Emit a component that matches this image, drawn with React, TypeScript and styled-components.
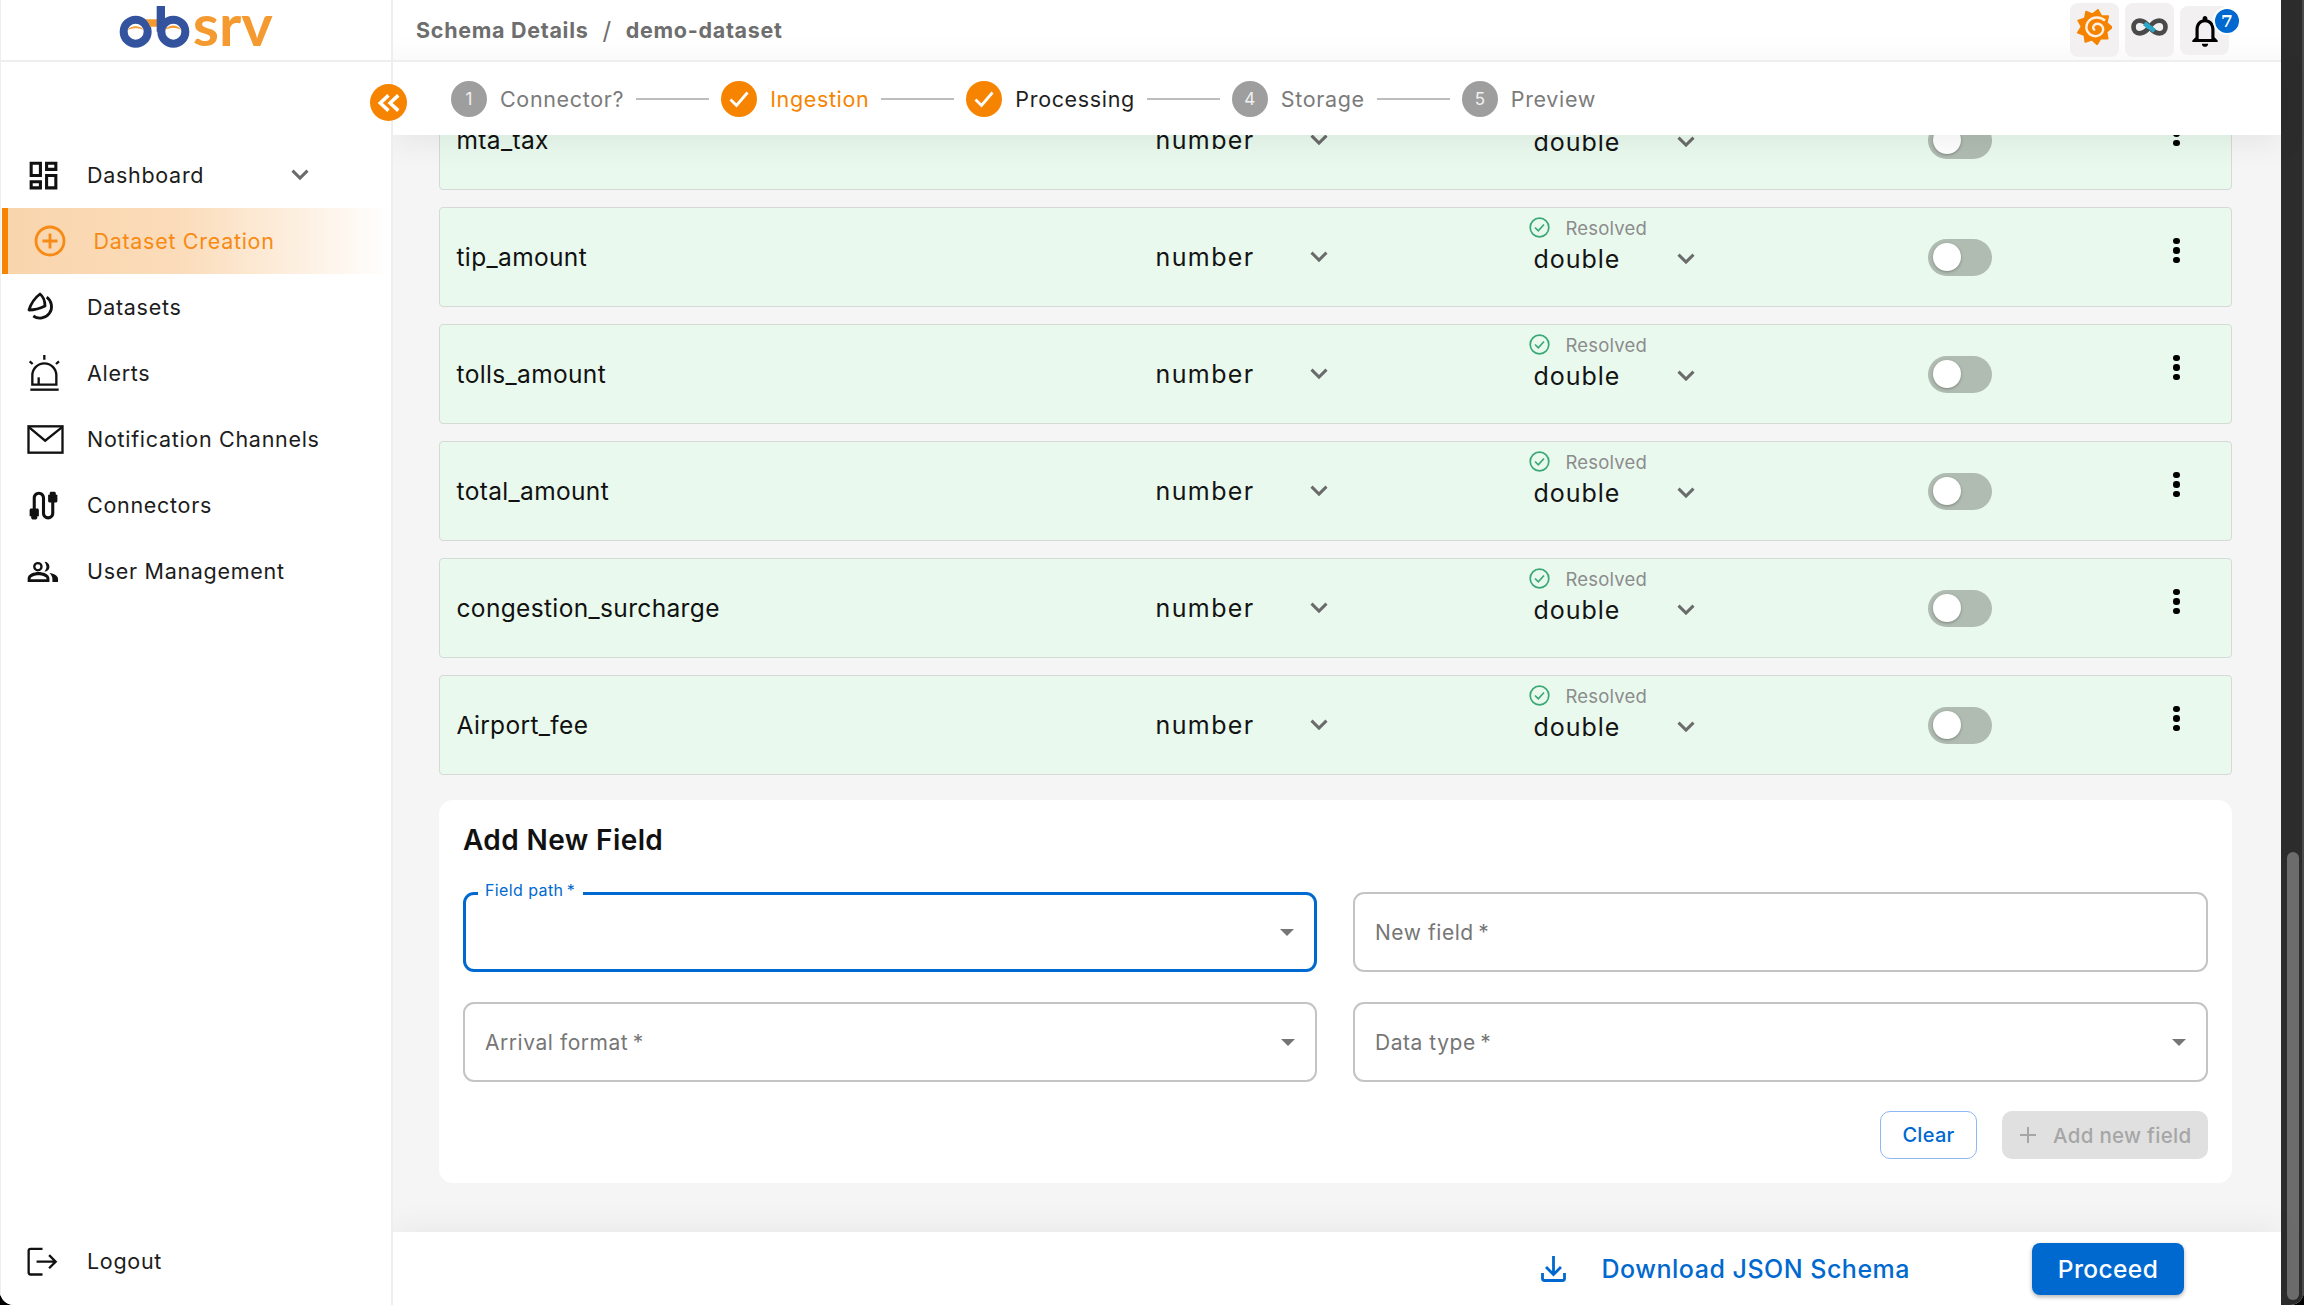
import React from "react";
import styled, { createGlobalStyle } from "styled-components";
import { MdCable, MdOutlineDashboard, MdOutlineNotifications } from "react-icons/md";

const FONT = `Inter, "Noto Sans", "Liberation Sans", sans-serif`;
const ORANGE = "#f78400";
const BLUE = "#0069d0";

const Global = createGlobalStyle`
  html, body { margin: 0; padding: 0; background: #000; overflow: hidden; }
  * { box-sizing: border-box; }
  body { font-family: ${FONT}; }
`;

const Shell = styled.div`
  width: 2304px;
  height: 1305px;
  display: flex;
  overflow: hidden;
  border-radius: 0 0 14px 14px;
  background: #fff;
`;

const Sidebar = styled.aside`
  position: relative;
  flex: 0 0 393px;
  display: flex;
  flex-direction: column;
  border-right: 2px solid #eeeeee;
  border-left: 1px solid #eeeeee;
  background: #fff;
  z-index: 4;
`;

const LogoBar = styled.div`
  height: 62px;
  flex: none;
  display: flex;
  justify-content: center;
  border-bottom: 2px solid #eeeeee;
  margin-right: -2px;
  padding-right: 5px;
`;

const CollapseButton = styled.div`
  position: absolute;
  top: 84px;
  right: -16px;
  width: 37px;
  height: 37px;
  border-radius: 50%;
  background: ${ORANGE};
  display: flex;
  align-items: center;
  justify-content: center;
`;

const Nav = styled.nav`
  flex: 1;
  display: flex;
  flex-direction: column;
  padding-top: 80px;
`;

const NavItem = styled.div<{ $active?: boolean }>`
  height: 66px;
  flex: none;
  display: flex;
  align-items: center;
  padding-left: 26px;
  font-size: 21.5px;
  letter-spacing: 0.7px;
  color: ${(p) => (p.$active ? "#f78a14" : "#1c1c1c")};
  ${(p) =>
    p.$active &&
    `border-left: 6px solid ${ORANGE};
     margin-left: 1px;
     padding-left: 25px;
     background: linear-gradient(90deg, #f9d5ad 0%, #fbdcba 45%, #ffffff 100%);`}
`;

const NavIconSlot = styled.span<{ $active?: boolean }>`
  flex: none;
  width: ${(p) => (p.$active ? "59.5px" : "60px")};
  ${(p) => p.$active && "margin-left: 1px;"}
  display: flex;
  align-items: center;
  justify-content: flex-start;
  color: #111;
`;

const NavCaret = styled.span`
  margin-left: 87px;
  display: flex;
`;

const DashGlyph = styled(MdOutlineDashboard)`
  margin-left: -2px;
`;

const CableGlyph = styled(MdCable)`
  margin-left: -2px;
`;

const BellGlyph = styled(MdOutlineNotifications)`
  margin-top: 6px;
`;

const Spacer = styled.div`
  flex: 1;
`;

const LogoutItem = styled(NavItem)`
  margin-bottom: 11px;
`;

const Main = styled.main`
  flex: 1;
  min-width: 0;
  display: flex;
  flex-direction: column;
  background: #f5f5f5;
  position: relative;
`;

const Header = styled.header`
  height: 62px;
  flex: none;
  display: flex;
  align-items: center;
  justify-content: space-between;
  padding: 0 52px 0 23px;
  background: linear-gradient(180deg, #ffffff 60%, #fafafa 100%);
  border-bottom: 2px solid #eeeeee;
  position: relative;
  z-index: 3;
`;

const Crumbs = styled.div`
  display: flex;
  align-items: center;
  gap: 14px;
  font-size: 21.5px;
  font-weight: 700;
  color: #6e6e6e;
  letter-spacing: 0.7px;
`;

const Slash = styled.span`
  font-weight: 400;
  font-size: 24px;
`;

const HeaderActions = styled.div`
  display: flex;
  gap: 6px;
  align-items: flex-start;
  height: 54px;
`;

const ActionTile = styled.div<{ $short?: boolean }>`
  position: relative;
  width: 49px;
  height: ${(p) => (p.$short ? "49px" : "54px")};
  margin-top: ${(p) => (p.$short ? "3px" : "0")};
  background: #f2f0f1;
  border-radius: 8px;
  display: flex;
  align-items: flex-start;
  justify-content: center;
`;

const Badge = styled.span`
  position: absolute;
  top: 1px;
  right: -12px;
  width: 28px;
  height: 28px;
  border-radius: 50%;
  background: ${BLUE};
  border: 2px solid #fff;
  color: #fff;
  font-family: "DejaVu Serif", serif;
  font-weight: 700;
  font-size: 17px;
  display: flex;
  align-items: center;
  justify-content: center;
`;

const Stepper = styled.div`
  height: 73px;
  flex: none;
  display: flex;
  align-items: center;
  padding-left: 58px;
  background: #fff;
  box-shadow: 0 6px 34px rgba(0, 0, 0, 0.07);
  position: relative;
  z-index: 2;
`;

const StepDot = styled.span<{ $done?: boolean }>`
  flex: none;
  width: 36px;
  height: 36px;
  border-radius: 50%;
  background: ${(p) => (p.$done ? ORANGE : "#9e9e9e")};
  color: #f1f1f1;
  font-size: 17px;
  display: flex;
  align-items: center;
  justify-content: center;
`;

const StepLabel = styled.span<{ $tone: "muted" | "orange" | "dark" }>`
  margin-left: 13px;
  font-size: 21.5px;
  letter-spacing: 0.65px;
  color: ${(p) => (p.$tone === "orange" ? ORANGE : p.$tone === "dark" ? "#1f1f1f" : "#7b7b7b")};
`;

const StepLine = styled.span`
  flex: none;
  width: 73px;
  height: 2px;
  margin: 0 12px;
  background: #bdbdbd;
`;

const Scroller = styled.div`
  flex: 1;
  min-height: 0;
  overflow: hidden;
  padding: 0 49px 0 46px;
`;

const Rows = styled.div`
  margin-top: -45px;
  display: flex;
  flex-direction: column;
  gap: 17px;
`;

const Row = styled.div`
  height: 100px;
  flex: none;
  display: grid;
  grid-template-columns: 699px 378px 394px 245.5px 1fr;
  padding-left: 16.5px;
  align-items: center;
  background: #e9f9ee;
  border: 1.5px solid #d6dad7;
  border-radius: 4px;
`;

const FieldName = styled.span`
  font-size: 24.5px;
  letter-spacing: 0.35px;
  color: #111;
`;

const TypeSelect = styled.div`
  width: 172px;
  display: flex;
  align-items: center;
  justify-content: space-between;
  font-size: 25px;
  letter-spacing: 1.4px;
  color: #141414;
`;

const StatusCell = styled.div`
  display: flex;
  flex-direction: column;
  gap: 3px;
  margin-top: -26px;
`;

const Resolved = styled.div`
  display: flex;
  align-items: center;
  gap: 16px;
  height: 26px;
  margin-left: -5px;
  font-size: 18.5px;
  letter-spacing: 0.2px;
  color: #8c8c8c;
`;

const DoubleSelect = styled.div`
  width: 161px;
  display: flex;
  align-items: center;
  justify-content: space-between;
  font-size: 25px;
  letter-spacing: 0.95px;
  color: #141414;
`;

const Track = styled.div`
  width: 64px;
  height: 37px;
  border-radius: 19px;
  background: #b0bcb2;
  display: flex;
  align-items: center;
  padding-left: 5px;
`;

const Knob = styled.span`
  width: 28px;
  height: 28px;
  border-radius: 50%;
  background: #fff;
  box-shadow: 0 1px 3px rgba(0, 0, 0, 0.3);
`;

const MoreCell = styled.div`
  display: flex;
  flex-direction: column;
  gap: 3px;
  margin-top: -13px;
`;

const Dot = styled.span`
  width: 6.5px;
  height: 6.5px;
  border-radius: 50%;
  background: #000;
`;

const Card = styled.section`
  margin: 25px 0 0;
  height: 383px;
  background: #fff;
  border-radius: 14px;
  padding: 24px 24px 0;
`;

const CardTitle = styled.h2`
  margin: 0;
  height: 68px;
  font-size: 28px;
  font-weight: 600;
  line-height: 32px;
  letter-spacing: 0.4px;
  color: #111;
`;

const FieldGrid = styled.div`
  display: grid;
  grid-template-columns: 854px 855px;
  column-gap: 36px;
  row-gap: 30px;
`;

const FieldBox = styled.div<{ $focus?: boolean }>`
  position: relative;
  height: 80px;
  border-radius: 11px;
  border: ${(p) => (p.$focus ? `3px solid ${BLUE}` : "2px solid #c4c4c4")};
  display: flex;
  align-items: center;
  justify-content: space-between;
  padding: 0 20px 0 20px;
  font-size: 21px;
  letter-spacing: 0.55px;
  color: #767676;
`;

const FloatLabel = styled.span`
  position: absolute;
  top: -14px;
  left: 12px;
  background: #fff;
  padding: 0 8px 0 7px;
  line-height: 18px;
  font-size: 16px;
  letter-spacing: 0.4px;
  color: ${BLUE};
`;

const Caret = styled.span`
  width: 0;
  height: 0;
  border-left: 7.5px solid transparent;
  border-right: 7.5px solid transparent;
  border-top: 7.5px solid #767676;
`;

const CardActions = styled.div`
  display: flex;
  justify-content: flex-end;
  gap: 25px;
  margin-top: 29px;
`;

const ClearButton = styled.button`
  width: 97px;
  height: 48px;
  border-radius: 10px;
  border: 1.5px solid #8db8f0;
  background: #fff;
  color: ${BLUE};
  font: 500 20px ${FONT};
  letter-spacing: 0.3px;
`;

const AddButton = styled.button`
  width: 206px;
  height: 48px;
  border-radius: 10px;
  border: none;
  background: #e0e0e0;
  color: #a6a6a6;
  font: 500 20.5px ${FONT};
  letter-spacing: 0.3px;
  display: flex;
  align-items: center;
  gap: 16px;
  padding: 0 0 0 17px;
  white-space: nowrap;
`;

const Footer = styled.footer`
  position: absolute;
  left: 0;
  right: 0;
  bottom: 0;
  height: 73px;
  background: #fff;
  box-shadow: 0 -6px 30px rgba(0, 0, 0, 0.05);
  display: flex;
  align-items: center;
  justify-content: flex-end;
  padding-right: 97px;
  z-index: 2;
`;

const DownloadLink = styled.div`
  display: flex;
  align-items: center;
  gap: 36px;
  margin-right: 122px;
  color: ${BLUE};
  font-size: 25px;
  font-weight: 500;
  letter-spacing: 0.5px;
`;

const ProceedButton = styled.button`
  width: 152px;
  height: 52px;
  border: none;
  border-radius: 8px;
  background: ${BLUE};
  color: #fff;
  font: 500 24.5px ${FONT};
  letter-spacing: 0.4px;
  box-shadow: 0 2px 4px rgba(0, 0, 0, 0.3);
`;

const ScrollRail = styled.div`
  flex: 0 0 23px;
  background: #2c2c2c;
  display: flex;
  flex-direction: column;
  padding: 852px 3px 5px 6px;
  border-right: 2px solid #4a4a4a;
`;

const ScrollThumb = styled.div`
  flex: 1;
  background: #6c6c6c;
  border-radius: 6px;
`;

const GrafanaSvg = styled.svg`
  margin-top: 6px;
`;

const LinkSvg = styled.svg`
  margin-top: 15px;
`;

const Chevron = ({ w = 18, color = "#6b6b6b" }: { w?: number; color?: string }) => (
  <svg width={w} height={w * 0.62} viewBox="0 0 18 11" fill="none">
    <path d="M1.5 1.5L9 9l7.5-7.5" stroke={color} strokeWidth="3" />
  </svg>
);

const Logo = () => (
  <svg width="170" height="56" viewBox="0 0 510 168" overflow="visible" role="img" aria-label="obsrv">
    <circle cx="77" cy="95" r="36" fill="none" stroke="#33539e" strokeWidth="24" />
    <path d="M54 90c6-15 40-15 46 0c-12-7-34-7-46 0z" fill="#f59a30" />
    <path d="M106 58h36v22h-22c-2-8-8-16-14-22z" fill="#f59a30" />
    <path d="M140 18h25v77h-25z" fill="#33539e" />
    <circle cx="190" cy="95" r="36" fill="none" stroke="#33539e" strokeWidth="24" />
    <path d="M166 90c8-18 38-18 48 0c-14-8-34-8-48 0z" fill="#f59a30" />
    <text x="248" y="138" fontFamily="Lato, sans-serif" fontWeight="700" fontSize="170" fill="#f59a30" textLength="240" lengthAdjust="spacingAndGlyphs">srv</text>
  </svg>
);

const grafanaPoints = (() => {
  const pts: string[] = [];
  const n = 9;
  for (let i = 0; i < n * 2; i++) {
    const r = i % 2 === 0 ? 50 : 37;
    const a = (Math.PI * i) / n - Math.PI / 2 + 0.2;
    pts.push(`${(50 + r * Math.cos(a)).toFixed(1)},${(50 + r * Math.sin(a)).toFixed(1)}`);
  }
  return pts.join(" ");
})();

const GrafanaIcon = () => (
  <GrafanaSvg width="35" height="36" viewBox="0 0 100 100">
    <polygon points={grafanaPoints} fill="#f58300" stroke="#f58300" strokeWidth="5" strokeLinejoin="round" />
    <path d="M80 32C68 20 42 18 30 38c-10 20 6 40 26 38 14-2 22-14 18-25-4-10-17-13-24-7-6 5-5 13 2 15" fill="none" stroke="#fdf0e2" strokeWidth="7" />
  </GrafanaSvg>
);

const LinkIcon = () => (
  <LinkSvg width="37" height="18" viewBox="0 0 110 54">
    <path d="M55 27C44 12 33 8 25 8 14 8 7 17 7 27s7 19 18 19c8 0 19-4 30-19s22-19 30-19c11 0 18 9 18 19s-7 19-18 19c-8 0-19-4-30-19z" fill="none" stroke="#4a4a4a" strokeWidth="14" />
    <path d="M40 16l15 12M55 27l15 12" fill="none" stroke="#2aa7c9" strokeWidth="14" />
  </LinkSvg>
);

const PlusCircleIcon = () => (
  <svg width="32" height="32" viewBox="0 0 32 32" fill="none" stroke="#f78a14" strokeWidth="2.8">
    <circle cx="16" cy="16" r="14" />
    <path d="M16 8.5v15M8.5 16h15" />
  </svg>
);

const PieIcon = () => (
  <svg width="32" height="32" viewBox="0 0 32 32" fill="none" stroke="#111" strokeWidth="2.8" strokeLinejoin="round">
    <path d="M13 3Q5 9 2 19Q10 19 18 15Q18 7 13 3z" />
    <path d="M19.7 6.2A11.5 11.5 0 1 1 6.3 25" />
  </svg>
);

const SirenIcon = () => (
  <svg width="35" height="40" viewBox="80 220 105 120" fill="none" stroke="#111" strokeWidth="7">
    <path d="M96 315v-28a36 36 0 0 1 72 0v28z" />
    <path d="M115 315v-22" />
    <path d="M90 330h85" />
    <path d="M132 226v14M88 245l9 8M176 245l-9 8" />
  </svg>
);

const MailIcon = () => (
  <svg width="37" height="29" viewBox="78 436 110 87" fill="none" stroke="#111" strokeWidth="7">
    <rect x="82" y="440" width="102" height="79" />
    <path d="M84 443l48 40 50-40" />
  </svg>
);

const PeopleIcon = () => (
  <svg width="33" height="24" viewBox="85 835 100 70" fill="#111">
    <circle cx="118" cy="857" r="11" fill="none" stroke="#111" strokeWidth="7" />
    <path d="M138 842a15 15 0 0 1 0 30a24 24 0 0 0 0-30z" />
    <path d="M87 903v-10c0-14 20-20 33-20s33 6 33 20v10h-9v-10c0-6-14-10-24-10s-24 4-24 10v2h48v8z" />
    <path d="M153 876c14 2 26 8 26 18v9h-17v-9c0-7-4-13-9-18z" />
  </svg>
);

const LogoutIcon = () => (
  <svg width="31" height="29" viewBox="85 198 94 87" fill="none" stroke="#111" strokeWidth="7">
    <path d="M132 203h-36a6 6 0 0 0-6 6v66a6 6 0 0 0 6 6h36" />
    <path d="M114 242h58M152 222l20 20-20 20" />
  </svg>
);

const CheckBadge = () => (
  <svg width="21" height="21" viewBox="0 0 21 21" fill="none" stroke="#3aa876" strokeWidth="1.7">
    <circle cx="10.5" cy="10.5" r="9.3" />
    <path d="M6 10.5l3.3 3.3L15 7.5" />
  </svg>
);

const StepCheck = () => (
  <svg width="22" height="18" viewBox="0 0 22 18" fill="none" stroke="#fff" strokeWidth="2.8">
    <path d="M2.5 9.5l6 6L19.5 2.5" />
  </svg>
);

const DownloadIcon = () => (
  <svg width="25" height="26" viewBox="0 0 25 26" fill="none" stroke={BLUE} strokeWidth="2.8">
    <path d="M12.5 0v18M5 11l7.5 7.5L20 11" />
    <path d="M1.5 17v5.5a2 2 0 0 0 2 2h18a2 2 0 0 0 2-2V17" />
  </svg>
);

const fields = ["mta_tax", "tip_amount", "tolls_amount", "total_amount", "congestion_surcharge", "Airport_fee"];

const steps: { key: string; label: string; n?: string; tone: "muted" | "orange" | "dark" }[] = [
  { key: "connector", label: "Connector?", n: "1", tone: "muted" },
  { key: "ingestion", label: "Ingestion", tone: "orange" },
  { key: "processing", label: "Processing", tone: "dark" },
  { key: "storage", label: "Storage", n: "4", tone: "muted" },
  { key: "preview", label: "Preview", n: "5", tone: "muted" },
];

const navItems = [
  { label: "Datasets", icon: <PieIcon /> },
  { label: "Alerts", icon: <SirenIcon /> },
  { label: "Notification Channels", icon: <MailIcon /> },
  { label: "Connectors", icon: <CableGlyph size={37} /> },
  { label: "User Management", icon: <PeopleIcon /> },
];

export default function App() {
  return (
    <Shell>
      <Global />
      <Sidebar>
        <LogoBar>
          <Logo />
        </LogoBar>
        <CollapseButton>
          <svg width="24" height="20" viewBox="0 0 22 18" fill="none" stroke="#fff" strokeWidth="3.2">
            <path d="M10.5 2L3 9l7.5 7M19.5 2L12 9l7.5 7" />
          </svg>
        </CollapseButton>
        <Nav>
          <NavItem>
            <NavIconSlot>
              <DashGlyph size={37} />
            </NavIconSlot>
            Dashboard
            <NavCaret>
              <Chevron />
            </NavCaret>
          </NavItem>
          <NavItem $active>
            <NavIconSlot $active>
              <PlusCircleIcon />
            </NavIconSlot>
            Dataset Creation
          </NavItem>
          {navItems.map((item) => (
            <NavItem key={item.label}>
              <NavIconSlot>{item.icon}</NavIconSlot>
              {item.label}
            </NavItem>
          ))}
          <Spacer />
          <LogoutItem>
            <NavIconSlot>
              <LogoutIcon />
            </NavIconSlot>
            Logout
          </LogoutItem>
        </Nav>
      </Sidebar>

      <Main>
        <Header>
          <Crumbs>
            <span>Schema Details</span>
            <Slash>/</Slash>
            <span>demo-dataset</span>
          </Crumbs>
          <HeaderActions>
            <ActionTile>
              <GrafanaIcon />
            </ActionTile>
            <ActionTile>
              <LinkIcon />
            </ActionTile>
            <ActionTile $short>
              <BellGlyph size={38} />
              <Badge>7</Badge>
            </ActionTile>
          </HeaderActions>
        </Header>

        <Stepper>
          {steps.map((s, i) => (
            <React.Fragment key={s.key}>
              <StepDot $done={!s.n}>{s.n ?? <StepCheck />}</StepDot>
              <StepLabel $tone={s.tone}>{s.label}</StepLabel>
              {i < steps.length - 1 && <StepLine />}
            </React.Fragment>
          ))}
        </Stepper>

        <Scroller>
          <Rows>
            {fields.map((name) => (
              <Row key={name}>
                <FieldName>{name}</FieldName>
                <TypeSelect>
                  number
                  <Chevron />
                </TypeSelect>
                <StatusCell>
                  <Resolved>
                    <CheckBadge />
                    Resolved
                  </Resolved>
                  <DoubleSelect>
                    double
                    <Chevron />
                  </DoubleSelect>
                </StatusCell>
                <Track>
                  <Knob />
                </Track>
                <MoreCell>
                  <Dot />
                  <Dot />
                  <Dot />
                </MoreCell>
              </Row>
            ))}
          </Rows>

          <Card>
            <CardTitle>Add New Field</CardTitle>
            <FieldGrid>
              <FieldBox $focus>
                <FloatLabel>Field path{"\u2009"}*</FloatLabel>
                <span />
                <Caret />
              </FieldBox>
              <FieldBox>New field{"\u2009"}*</FieldBox>
              <FieldBox>
                Arrival format{"\u2009"}*
                <Caret />
              </FieldBox>
              <FieldBox>
                Data type{"\u2009"}*
                <Caret />
              </FieldBox>
            </FieldGrid>
            <CardActions>
              <ClearButton>Clear</ClearButton>
              <AddButton>
                <svg width="18" height="18" viewBox="0 0 18 18" stroke="#a6a6a6" strokeWidth="2">
                  <path d="M9 1v16M1 9h16" />
                </svg>
                Add new field
              </AddButton>
            </CardActions>
          </Card>
        </Scroller>

        <Footer>
          <DownloadLink>
            <DownloadIcon />
            Download JSON Schema
          </DownloadLink>
          <ProceedButton>Proceed</ProceedButton>
        </Footer>
      </Main>

      <ScrollRail>
        <ScrollThumb />
      </ScrollRail>
    </Shell>
  );
}
